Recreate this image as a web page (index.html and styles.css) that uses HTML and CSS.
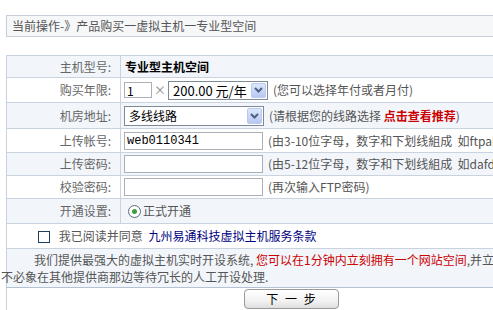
FILE: index.html
```html
<!DOCTYPE html>
<html lang="zh-CN">
<head>
    <meta charset="UTF-8">
    <title>产品购买</title>
    <link rel="stylesheet" href="styles.css">
</head>
<body>
    <div class="page">
        <div class="crumb">当前操作-》产品购买一虚拟主机一专业型空间</div>

        <table class="buy-table">
            <tr class="alt r22">
                <td class="label">主机型号:</td>
                <td class="value"><b>专业型主机空间</b></td>
            </tr>
            <tr class="r25">
                <td class="label">购买年限:</td>
                <td class="value">
                    <span class="field">
                        <input class="text small" type="text" value="1">
                        <span class="times">×</span>
                        <span class="fake-select price">
                            <span class="sel-text">200.00 元/年</span>
                            <span class="sel-btn"><svg width="9" height="6" viewBox="0 0 9 6"><path d="M1 1 L4.5 4.5 L8 1" fill="none" stroke="#4d6185" stroke-width="2"/></svg></span>
                        </span>
                        <span class="hint">(您可以选择年付或者月付)</span>
                    </span>
                </td>
            </tr>
            <tr class="alt r26">
                <td class="label">机房地址:</td>
                <td class="value">
                    <span class="field">
                        <span class="fake-select room">
                            <span class="sel-text">多线线路</span>
                            <span class="sel-btn"><svg width="9" height="6" viewBox="0 0 9 6"><path d="M1 1 L4.5 4.5 L8 1" fill="none" stroke="#4d6185" stroke-width="2"/></svg></span>
                        </span>
                        <span class="hint">(请根据您的线路选择 <a class="red-link" href="#">点击查看推荐</a>)</span>
                    </span>
                </td>
            </tr>
            <tr class="r24">
                <td class="label">上传帐号:</td>
                <td class="value">
                    <span class="field">
                        <input class="text wide mono" type="text" value="web0110341">
                        <span class="hint">(由3-10位字母，数字和下划线組成&nbsp; 如ftpabc)</span>
                    </span>
                </td>
            </tr>
            <tr class="alt r23">
                <td class="label">上传密码:</td>
                <td class="value">
                    <span class="field">
                        <input class="text wide" type="password">
                        <span class="hint">(由5-12位字母，数字和下划线組成&nbsp; 如dafdsf)</span>
                    </span>
                </td>
            </tr>
            <tr class="r23">
                <td class="label">校验密码:</td>
                <td class="value">
                    <span class="field">
                        <input class="text wide" type="password">
                        <span class="hint">(再次输入FTP密码)</span>
                    </span>
                </td>
            </tr>
            <tr class="alt r25">
                <td class="label">开通设置:</td>
                <td class="value">
                    <span class="field">
                        <span class="radio"><span class="dot"></span></span>
                        <span class="radio-text">正式开通</span>
                    </span>
                </td>
            </tr>
            <tr class="r25">
                <td class="agree" colspan="2">
                    <span class="check"></span>
                    <span class="agree-text">我已阅读并同意</span>
                    <a class="terms" href="#">九州易通科技虚拟主机服务条款</a>
                </td>
            </tr>
            <tr class="alt r39 last-alt">
                <td class="notice" colspan="2">
                    <div class="notice-text">我们提供最强大的虚拟主机实时开设系统, <span class="red">您可以在1分钟内立刻拥有一个网站空间</span>,并立即开通使用,<br>不必象在其他提供商那边等待冗长的人工开设处理.</div>
                </td>
            </tr>
            <tr class="r26">
                <td class="submit-cell" colspan="2">
                    <button class="next-btn" type="button">下 一 步</button>
                </td>
            </tr>
        </table>
    </div>
</body>
</html>
```

FILE: styles.css
```css
body {
    margin: 0;
    padding: 0;
    background-color: #ffffff;
    font-family: "Noto Sans CJK SC", "Liberation Sans", sans-serif;
    font-size: 12px;
    line-height: 16px;
    color: #555;
    overflow: hidden;
}

.page {
    width: 570px;
    padding: 15px 0 0 6px;
}

.crumb {
    width: 600px;
    height: 20px;
    line-height: 20px;
    padding-left: 5px;
    border: 1px solid #c7ced8;
    background-color: #f6f7f9;
    color: #555;
}

.buy-table {
    margin-top: 18px;
    width: 570px;
    border-collapse: collapse;
    border: 1px solid #c9d3df;
}

.buy-table td {
    box-sizing: border-box;
    border-top: 1px solid #c9d3df;
    padding: 0;
    line-height: 16px;
}

.buy-table tr.alt td {
    background-color: #f2f6fb;
}

/* row heights */
.r22 td { height: 22px; }
.r23 td { height: 23px; }
.r24 td { height: 24px; }
.r25 td { height: 25px; }
.r26 td { height: 26px; }
.r39 td { height: 39px; }

.buy-table tr.last-alt td {
    border-bottom: 1px solid #b4c2d3;
}

.label {
    width: 114px;
    padding-right: 9px !important;
    text-align: right;
    color: #666;
    border-right: 1px solid #c9d3df;
}

.value {
    padding-left: 3px !important;
    white-space: nowrap;
}

.value b {
    color: #000;
    font-weight: bold;
    padding-left: 1px;
}

.field {
    display: flex;
    align-items: center;
}

.text {
    box-sizing: border-box;
    height: 17px;
    margin: 0;
    padding: 0 2px;
    border: 1px solid #a9b0b8;
    font-family: "Noto Sans CJK SC", sans-serif;
    font-size: 12px;
    color: #000;
    background: #fff;
}

.text.small {
    width: 28px;
    height: 16px;
}

.text.wide {
    width: 139px;
    height: 18px;
}

.text.mono {
    font-family: "Liberation Mono", monospace;
    font-size: 12px;
}

.times {
    width: 16px;
    text-align: center;
    color: #888;
}

.fake-select {
    position: relative;
    box-sizing: border-box;
    display: inline-block;
    height: 19px;
    border: 1px solid #7f8a98;
    background: #fff;
    color: #000;
}

.fake-select.price {
    width: 100px;
    font-size: 13px;
}

.fake-select.room {
    width: 140px;
    height: 20px;
}

.sel-text {
    display: block;
    padding-left: 4px;
    line-height: 17px;
}

.sel-btn {
    position: absolute;
    top: 1px;
    right: 1px;
    width: 15px;
    height: 15px;
    box-sizing: border-box;
    border: 1px solid #b9c9ef;
    border-radius: 2px;
    background: linear-gradient(#dde7fc, #b7c8f2);
    display: flex;
    align-items: center;
    justify-content: center;
}

.fake-select.room .sel-btn {
    height: 16px;
}

.hint {
    margin-left: 5px;
    color: #555;
}

.red-link {
    color: #cc0000;
    font-weight: bold;
    text-decoration: none;
}

.radio {
    box-sizing: border-box;
    width: 13px;
    height: 13px;
    margin: 0 2px 0 4px;
    border: 1px solid #5d6b78;
    border-radius: 50%;
    background: #fff;
    display: flex;
    align-items: center;
    justify-content: center;
}

.dot {
    width: 5px;
    height: 5px;
    border-radius: 50%;
    background: #3aa13a;
}

.radio-text {
    color: #555;
}

.agree {
    padding-left: 31px !important;
    white-space: nowrap;
}

.check {
    display: inline-block;
    box-sizing: border-box;
    width: 12px;
    height: 12px;
    border: 1px solid #1c3f5e;
    background: #fff;
    vertical-align: -2px;
    margin-right: 6px;
}

.agree-text {
    color: #555;
}

.terms {
    margin-left: 3px;
    color: #000080;
    text-decoration: none;
}

.notice-text {
    margin-left: -6px;
    text-indent: 33px;
    line-height: 17px;
    white-space: nowrap;
    color: #555;
}

.red {
    color: #cc0000;
}

.submit-cell {
    text-align: center;
    vertical-align: top;
}

.next-btn {
    width: 95px;
    height: 20px;
    margin-top: 1px;
    padding: 0;
    border: 1px solid #9a9a9a;
    border-radius: 4px;
    background: linear-gradient(#ffffff, #f2f2f2 60%, #dedede);
    font-family: "Noto Sans CJK SC", sans-serif;
    font-size: 12px;
    line-height: 18px;
    word-spacing: 4px;
    color: #000;
}
```
